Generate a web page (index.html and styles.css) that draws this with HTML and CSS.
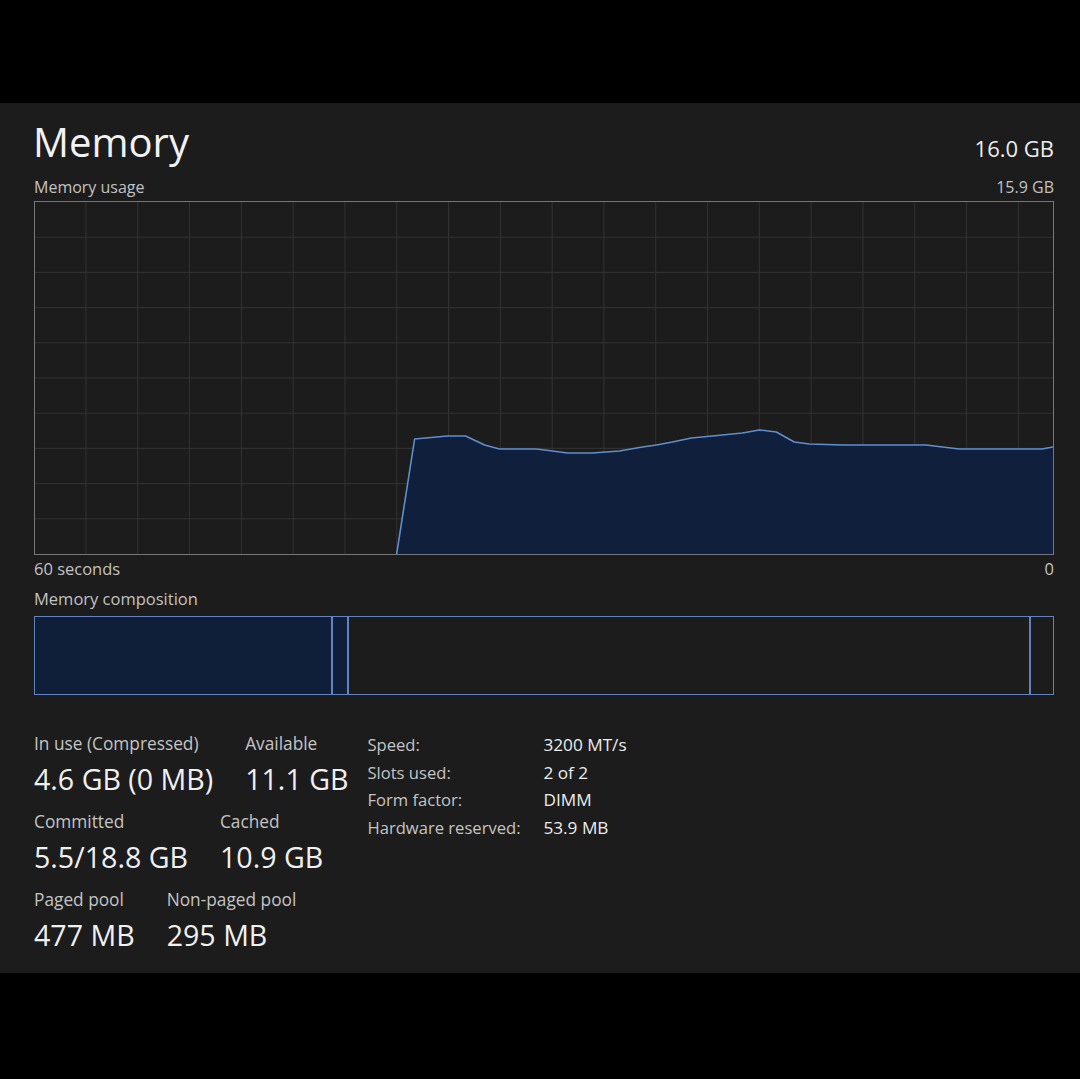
FILE: index.html
```html
<!DOCTYPE html>
<html lang="en">
<head>
<meta charset="utf-8">
<title>Memory</title>
<link rel="stylesheet" href="styles.css">
</head>
<body>
<main class="panel">
  <header class="head">
    <h1 class="title">Memory</h1>
    <div class="total">16.0 GB</div>
  </header>
  <div class="caption-row top">
    <span>Memory usage</span>
    <span>15.9 GB</span>
  </div>
  <div class="graph">
    <svg viewBox="0 0 1019 352" preserveAspectRatio="none" width="1019" height="352">
      <g class="grid">
        <line x1="51" y1="0" x2="51" y2="352"/>
        <line x1="102.85" y1="0" x2="102.85" y2="352"/>
        <line x1="154.7" y1="0" x2="154.7" y2="352"/>
        <line x1="206.55" y1="0" x2="206.55" y2="352"/>
        <line x1="258.4" y1="0" x2="258.4" y2="352"/>
        <line x1="310.25" y1="0" x2="310.25" y2="352"/>
        <line x1="362.1" y1="0" x2="362.1" y2="352"/>
        <line x1="413.95" y1="0" x2="413.95" y2="352"/>
        <line x1="465.8" y1="0" x2="465.8" y2="352"/>
        <line x1="517.65" y1="0" x2="517.65" y2="352"/>
        <line x1="569.5" y1="0" x2="569.5" y2="352"/>
        <line x1="621.35" y1="0" x2="621.35" y2="352"/>
        <line x1="673.2" y1="0" x2="673.2" y2="352"/>
        <line x1="725.05" y1="0" x2="725.05" y2="352"/>
        <line x1="776.9" y1="0" x2="776.9" y2="352"/>
        <line x1="828.75" y1="0" x2="828.75" y2="352"/>
        <line x1="880.6" y1="0" x2="880.6" y2="352"/>
        <line x1="932.45" y1="0" x2="932.45" y2="352"/>
        <line x1="984.3" y1="0" x2="984.3" y2="352"/>
        <line x1="0" y1="35.2" x2="1019" y2="35.2"/>
        <line x1="0" y1="70.4" x2="1019" y2="70.4"/>
        <line x1="0" y1="105.6" x2="1019" y2="105.6"/>
        <line x1="0" y1="140.8" x2="1019" y2="140.8"/>
        <line x1="0" y1="176" x2="1019" y2="176"/>
        <line x1="0" y1="211.2" x2="1019" y2="211.2"/>
        <line x1="0" y1="246.4" x2="1019" y2="246.4"/>
        <line x1="0" y1="281.6" x2="1019" y2="281.6"/>
        <line x1="0" y1="316.8" x2="1019" y2="316.8"/>
      </g>
      <path class="area" d="M362,352 L380,237 L413,234 L431,234 L450,243 L465,247 L502,247 L518,249 L533,251 L558,251 L585,249 L608,245 L622,243 L638,240 L657,236 L678,234 L708,231 L725,228 L742,230 L760,240 L775,242 L808,243 L892,243 L925,247 L1008,247 L1019,245 L1019,352 Z"/>
      <path class="line" d="M362,352 L380,237 L413,234 L431,234 L450,243 L465,247 L502,247 L518,249 L533,251 L558,251 L585,249 L608,245 L622,243 L638,240 L657,236 L678,234 L708,231 L725,228 L742,230 L760,240 L775,242 L808,243 L892,243 L925,247 L1008,247 L1019,245"/>
    </svg>
  </div>
  <div class="caption-row axis">
    <span>60 seconds</span>
    <span>0</span>
  </div>
  <div class="caption-row comp-label">
    <span>Memory composition</span>
  </div>
  <div class="composition">
    <div class="seg inuse"></div>
    <div class="seg modified"></div>
    <div class="seg standby"></div>
    <div class="seg free"></div>
  </div>
  <section class="stats">
    <div class="left">
      <div class="row">
        <div class="stat"><div class="label">In use (Compressed)</div><div class="value">4.6 GB (0 MB)</div></div>
        <div class="stat"><div class="label">Available</div><div class="value">11.1 GB</div></div>
      </div>
      <div class="row">
        <div class="stat"><div class="label">Committed</div><div class="value">5.5/18.8 GB</div></div>
        <div class="stat"><div class="label">Cached</div><div class="value">10.9 GB</div></div>
      </div>
      <div class="row">
        <div class="stat"><div class="label">Paged pool</div><div class="value">477 MB</div></div>
        <div class="stat"><div class="label">Non-paged pool</div><div class="value">295 MB</div></div>
      </div>
    </div>
    <dl class="specs">
      <dt>Speed:</dt><dd>3200 MT/s</dd>
      <dt>Slots used:</dt><dd>2 of 2</dd>
      <dt>Form factor:</dt><dd>DIMM</dd>
      <dt>Hardware reserved:</dt><dd>53.9 MB</dd>
    </dl>
  </section>
</main>
</body>
</html>
```
FILE: styles.css
```css
html, body {
  margin: 0;
  padding: 0;
  background: #000;
}
body {
  padding-top: 103px;
  font-family: "Open Sans", "Noto Sans", sans-serif;
}
.panel {
  box-sizing: border-box;
  height: 870px;
  background: #1c1c1c;
  padding: 15px 26px 0 34px;
  color: #e6e6e6;
}
.head {
  display: flex;
  justify-content: space-between;
  align-items: baseline;
}
.title {
  margin: 0 0 0 -1px;
  font-size: 40px;
  line-height: 48px;
  font-weight: 400;
  color: #f2f2f2;
}
.total {
  font-size: 22px;
  line-height: 28px;
  color: #ededed;
}
.caption-row {
  display: flex;
  justify-content: space-between;
  font-size: 16px;
  line-height: 20px;
  color: #c2c2c2;
}
.caption-row.top {
  margin-top: 11px;
}
.caption-row.axis {
  margin-top: 4px;
  font-size: 16.5px;
}
.caption-row.comp-label {
  margin-top: 10px;
  font-size: 16.5px;
}
.graph {
  box-sizing: border-box;
  margin-top: 4px;
  height: 354px;
  border: 1px solid #767676;
  background: #1c1c1c;
}
.graph svg {
  display: block;
  width: 100%;
  height: 100%;
}
.grid line {
  stroke: #323232;
  stroke-width: 1;
}
.area {
  fill: #0f1f3c;
}
.line {
  fill: none;
  stroke: #5f8fd0;
  stroke-width: 1.6;
  stroke-linejoin: round;
}
.composition {
  box-sizing: border-box;
  margin-top: 7px;
  height: 79px;
  border: 1px solid #6283bd;
  display: flex;
}
.seg {
  box-sizing: border-box;
  height: 100%;
}
.seg.inuse {
  width: 298px;
  background: #0f1e39;
  border-right: 2px solid #6283bd;
}
.seg.modified {
  width: 16px;
  background: #0f1e39;
  border-right: 2px solid #6283bd;
}
.seg.standby {
  flex: 1;
  border-right: 2px solid #6283bd;
}
.seg.free {
  width: 22px;
}
.stats {
  display: flex;
  gap: 19px;
  margin-top: 38px;
}
.left {
  display: flex;
  flex-direction: column;
  gap: 14px;
}
.row {
  display: flex;
  gap: 32px;
}
.label {
  font-size: 17.3px;
  line-height: 22px;
  color: #c4c4c4;
}
.value {
  margin-top: 6px;
  font-size: 28.6px;
  line-height: 36px;
  color: #f0f0f0;
}
.specs {
  margin: -2px 0 0 0;
  display: grid;
  grid-template-columns: 176px auto;
  align-content: start;
  font-size: 16.6px;
  line-height: 27.7px;
}
.specs dt {
  color: #c4c4c4;
}
.specs dd {
  margin: 0;
  font-size: 17.2px;
  color: #ececec;
}
```
